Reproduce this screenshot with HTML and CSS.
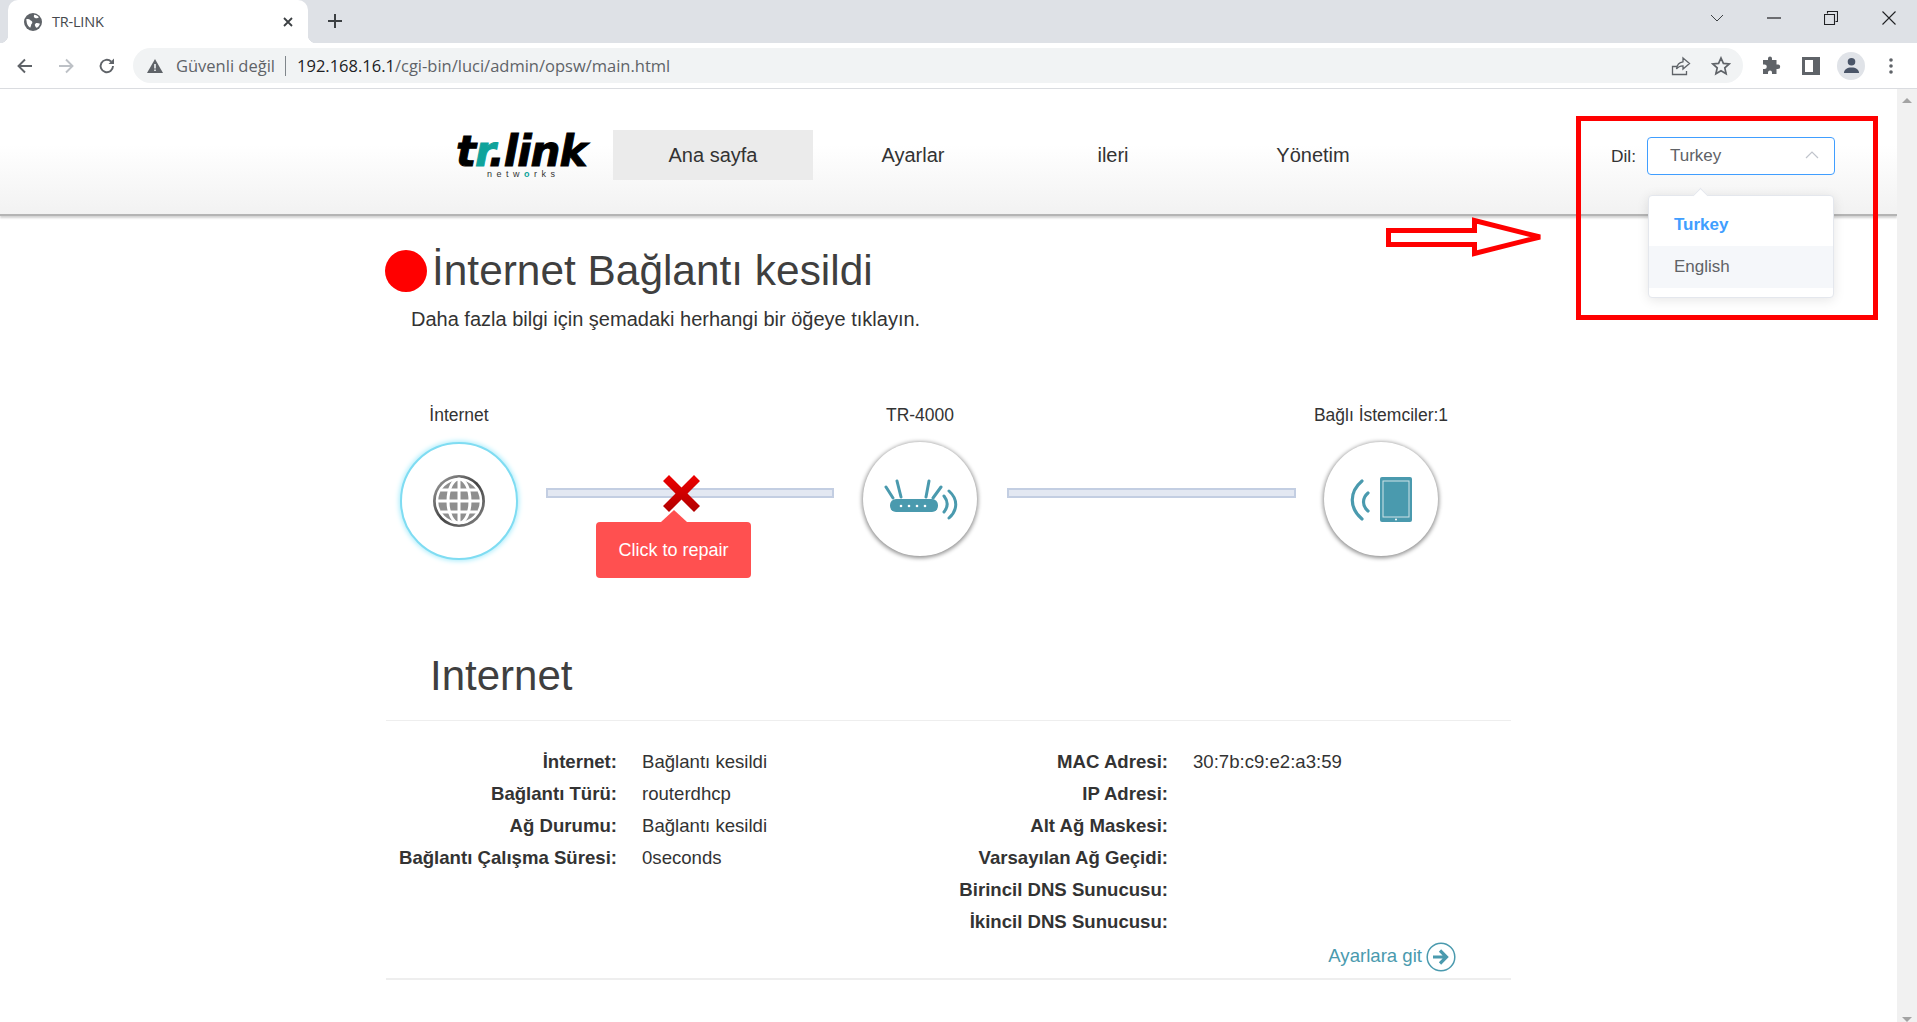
FILE: index.html

```html
<!DOCTYPE html>
<html lang="tr">
<head>
  <meta charset="utf-8">
  <title>TR-LINK</title>
  <link rel="stylesheet" href="styles.css">
</head>
<body>

<div class="tabstrip">
  <div class="tab">
    <svg class="favicon" viewBox="0 0 16 16"><circle cx="8" cy="8" r="8" fill="#5f6368"/><path d="M2 5.500c1.500-.500 2.800-.200 3.500.800.500.700 1.500.700 1.800 1.500.300.900-.200 1.700-.800 2.200-.200 1.200-.400 2-1 3-1.500-1-2.500-2.500-3-4.200zM9 1.500c1.800.200 3.200 1 4.200 2.200-.700.800-1.700 1-2.700.900-.900-.100-1.400-.700-1.800-1.500zM10.500 9c1.200-.200 2.500 0 3.700.500-.500 1.700-1.500 3-3 3.700-1-.800-1.500-2-1.600-3z" fill="#fff"/></svg>
    <span class="tab-title">TR-LINK</span>
    <svg class="tab-close" viewBox="0 0 12 12"><path d="M2 2l8 8M10 2l-8 8" stroke="#3c4043" stroke-width="1.800" fill="none"/></svg>
  </div>
  <svg class="new-tab" viewBox="0 0 16 16"><path d="M8 1v14M1 8h14" stroke="#3c4043" stroke-width="2" fill="none"/></svg>
  <div class="win-controls">
    <svg viewBox="0 0 14 8"><path d="M1 1l6 6 6-6" stroke="#3c4043" stroke-width="1" fill="none"/></svg>
    <svg viewBox="0 0 14 14"><path d="M0 7h14" stroke="#202124" stroke-width="1.200" fill="none"/></svg>
    <svg viewBox="0 0 14 14"><path d="M3.500 2.500V.500h10v10h-2M.500 3.500h10v10H.500z" stroke="#202124" stroke-width="1.100" fill="none"/></svg>
    <svg viewBox="0 0 14 14"><path d="M.500.500l13 13M13.500.500l-13 13" stroke="#202124" stroke-width="1.100" fill="none"/></svg>
  </div>
</div>

<div class="toolbar">
  <svg class="nav-btn" viewBox="0 0 18 18"><path d="M16 9H3M9 2.500L2.500 9 9 15.500" stroke="#5f6368" stroke-width="1.900" fill="none"/></svg>
  <svg class="nav-btn" viewBox="0 0 18 18"><path d="M2 9h13M9 2.500L15.500 9 9 15.500" stroke="#bdc1c6" stroke-width="1.900" fill="none"/></svg>
  <svg class="nav-btn" viewBox="0 0 18 18"><path d="M15 9a6.200 6.200 0 1 1-1.900-4.500" stroke="#5f6368" stroke-width="1.900" fill="none"/><path d="M16 1.500V7h-5.500z" fill="#5f6368"/></svg>
  <div class="omnibox">
    <svg class="warn" viewBox="0 0 16 14"><path d="M8 0l8 14H0z" fill="#5f6368"/><path d="M7.200 5h1.600v4.500H7.200zM7.200 10.500h1.600v1.600H7.200z" fill="#f1f3f4"/></svg>
    <span class="insecure">Güvenli değil</span>
    <span class="omni-sep"></span>
    <span class="url"><b>192.168.16.1</b>/cgi-bin/luci/admin/opsw/main.html</span>
    <svg class="omni-icon share" viewBox="0 0 20 20"><path d="M6 18.500H1.500v-8H6M1.500 18.500h14V15" stroke="#5f6368" stroke-width="1.300" fill="none"/><path d="M12 2l6.500 5.500L12 13v-3.200c-3 0-5 .800-6.500 3.200.400-3.800 2.700-6.700 6.500-7.200z" stroke="#5f6368" stroke-width="1.300" fill="none"/></svg>
    <svg class="omni-icon star" viewBox="0 0 20 20"><path d="M10 2l2.400 5.400 5.800.600-4.400 3.900 1.300 5.800L10 14.700l-5.100 3 1.300-5.800L1.800 8l5.800-.600z" stroke="#5f6368" stroke-width="1.700" fill="none"/></svg>
  </div>
  <svg class="tool-icon puzzle" viewBox="0 0 20 20"><path d="M7 2.500a2 2 0 0 1 4 0V4h4.500v4.500H17a2.200 2.200 0 0 1 0 4.400h-1.500V18H11v-1.500a2 2 0 0 0-4 0V18H2v-5h1.500a2.300 2.300 0 0 0 0-4.600H2V4h5z" fill="#5f6368"/></svg>
  <svg class="tool-icon panel" viewBox="0 0 18 18"><path d="M0 0h18v18H0zM3 3v12h8V3z" fill="#5f6368" fill-rule="evenodd"/></svg>
  <div class="avatar"><svg viewBox="0 0 18 18"><circle cx="9" cy="5" r="4" fill="#4a5568"/><path d="M1 17c0-4 3.500-6 8-6s8 2 8 6z" fill="#4a5568"/></svg></div>
  <svg class="tool-icon dots" viewBox="0 0 4 16"><circle cx="2" cy="2" r="1.800" fill="#5f6368"/><circle cx="2" cy="8" r="1.800" fill="#5f6368"/><circle cx="2" cy="14" r="1.800" fill="#5f6368"/></svg>
</div>

<div class="viewport">
  <div class="page">

    <div class="header">
      <div class="logo">
        <div class="logo-main">t<span class="logo-r">r</span>.link</div>
        <div class="logo-sub">netw<span class="logo-o">o</span>rks</div>
      </div>
      <ul class="menu">
        <li class="active">Ana sayfa</li>
        <li>Ayarlar</li>
        <li>ileri</li>
        <li>Yönetim</li>
      </ul>
      <div class="lang">
        <label>Dil:</label>
        <div class="select">
          <span>Turkey</span>
          <svg class="caret" viewBox="0 0 14 8"><path d="M1 7l6-6 6 6" stroke="#c0c4cc" stroke-width="1.200" fill="none"/></svg>
          <div class="dropdown">
            <div class="drop-item selected">Turkey</div>
            <div class="drop-item hover">English</div>
          </div>
        </div>
      </div>
    </div>

    <div class="content">
      <div class="status">
        <span class="dot"></span>
        <h1>İnternet Bağlantı kesildi</h1>
      </div>
      <p class="hint">Daha fazla bilgi için şemadaki herhangi bir öğeye tıklayın.</p>

      <div class="diagram">
        <div class="node node-net">
          <div class="node-label">İnternet</div>
          <div class="circle active-circle">
            <svg class="globe" viewBox="0 0 52 52">
              <defs>
                <linearGradient id="ring" x1="0" y1="0" x2="1" y2="1"><stop offset="0" stop-color="#a8a8a8"/><stop offset="0.5" stop-color="#444"/><stop offset="1" stop-color="#8a8a8a"/></linearGradient>
              </defs>
              <circle cx="26" cy="26" r="26" fill="url(#ring)"/>
              <circle cx="26" cy="26" r="22" fill="#8f8f8f" stroke="#fff" stroke-width="2.500"/>
              <ellipse cx="26" cy="26" rx="11" ry="22" fill="none" stroke="#fff" stroke-width="3"/>
              <path d="M26 4v44M4 26h44M8 15h36M8 37h36" stroke="#fff" stroke-width="3" fill="none"/>
            </svg>
          </div>
        </div>
        <div class="link link-first">
          <svg class="cross" viewBox="0 0 37 37">
            <defs><linearGradient id="crossFill" x1="0" y1="0" x2="0" y2="1"><stop offset="0" stop-color="#ee0000"/><stop offset="1" stop-color="#b00000"/></linearGradient></defs>
            <path d="M6 0l12.500 12.500L31 0l6 6-12.500 12.500L37 31l-6 6-12.500-12.500L6 37l-6-6 12.500-12.500L0 6z" fill="url(#crossFill)"/>
          </svg>
          <div class="repair">Click to repair</div>
        </div>
        <div class="node node-router">
          <div class="node-label">TR-4000</div>
          <div class="circle">
            <svg class="router" viewBox="0 0 75 41">
              <path d="M2 8l7 11M13 2l4 16M45 2l-3 16M57 8l-8 11" stroke="#4a9aae" stroke-width="3" stroke-linecap="round" fill="none"/>
              <rect x="6" y="20" width="48" height="13" rx="6" fill="#4a9aae"/>
              <g fill="#fff"><circle cx="17" cy="27" r="1.300"/><circle cx="25" cy="27" r="1.300"/><circle cx="33" cy="27" r="1.300"/><circle cx="41" cy="27" r="1.300"/></g>
              <path d="M60 17c4 5 4 11 0 16M65 12c9 8 9 19 0 27" stroke="#4a9aae" stroke-width="3" stroke-linecap="round" fill="none"/>
            </svg>
          </div>
        </div>
        <div class="link link-second"></div>
        <div class="node node-client">
          <div class="node-label">Bağlı İstemciler:1</div>
          <div class="circle">
            <svg class="tablet" viewBox="0 0 62 45">
              <path d="M12 4C-1 15-1 31 12 42M18 16c-6 5-6 13 0 18" stroke="#4a9aae" stroke-width="3.200" stroke-linecap="round" fill="none"/>
              <rect x="30" y="0" width="32" height="45" rx="2" fill="#4a9aae"/>
              <rect x="33" y="4" width="26" height="36" fill="none" stroke="#cfe3e8" stroke-width="1"/>
              <circle cx="46" cy="42.500" r="1" fill="#fff"/>
            </svg>
          </div>
        </div>
      </div>

      <h2 class="section-title">Internet</h2>
      <div class="info">
        <dl class="info-col col-left">
          <dt>İnternet:</dt><dd>Bağlantı kesildi</dd>
          <dt>Bağlantı Türü:</dt><dd>routerdhcp</dd>
          <dt>Ağ Durumu:</dt><dd>Bağlantı kesildi</dd>
          <dt>Bağlantı Çalışma Süresi:</dt><dd>0seconds</dd>
        </dl>
        <dl class="info-col">
          <dt>MAC Adresi:</dt><dd>30:7b:c9:e2:a3:59</dd>
          <dt>IP Adresi:</dt><dd></dd>
          <dt>Alt Ağ Maskesi:</dt><dd></dd>
          <dt>Varsayılan Ağ Geçidi:</dt><dd></dd>
          <dt>Birincil DNS Sunucusu:</dt><dd></dd>
          <dt>İkincil DNS Sunucusu:</dt><dd></dd>
        </dl>
      </div>
      <div class="go-row">
        <a class="go-link">Ayarlara git</a>
        <svg class="go-icon" viewBox="0 0 30 30"><circle cx="15" cy="15" r="13.800" fill="none" stroke="#4a9aae" stroke-width="1.500"/><path d="M7 15h13M14 8.500l6.500 6.500-6.500 6.500" stroke="#4a9aae" stroke-width="3.200" fill="none"/></svg>
      </div>
    </div>

    <div class="note-box"></div>
    <svg class="note-arrow" viewBox="0 0 164 40"><path d="M2.500 13.500H88.500V3.500L154 20 88.500 36.500V27.500H2.500z" fill="none" stroke="#f00" stroke-width="5"/></svg>
  </div>
  <div class="scrollbar"><span class="scroll-up"></span><span class="scroll-down"></span></div>
</div>

</body>
</html>
```

FILE: styles.css

```css
* { box-sizing: border-box; }
html, body { margin: 0; height: 100%; overflow: hidden; }
body { width: 1917px; height: 1022px; font-family: "Liberation Sans", Arial, sans-serif; color: #333; background: #fff; display: flex; flex-direction: column; }

/* browser chrome */
.tabstrip { height: 43px; background: #dee1e6; display: flex; align-items: flex-end; position: relative; flex: none; }
.tab { width: 300px; height: 43px; margin-left: 8px; padding-left: 16px; background: #fff; border-radius: 10px 10px 0 0; display: flex; align-items: center; position: relative; }
.tab::before, .tab::after { content: ""; position: absolute; bottom: 0; width: 8px; height: 8px; }
.tab::before { left: -8px; background: radial-gradient(circle at 0 0, #dee1e6 8px, #fff 8.500px); }
.tab::after { right: -8px; background: radial-gradient(circle at 100% 0, #dee1e6 8px, #fff 8.500px); }
.favicon { width: 18px; height: 18px; }
.tab-title { margin-left: 10px; font-family: "Open Sans", sans-serif; font-size: 14.500px; color: #45484d; letter-spacing: -0.200px; }
.tab-close { width: 12px; height: 12px; margin-left: auto; margin-right: 14px; }
.new-tab { width: 16px; height: 16px; margin: 0 0 14px 19px; }
.win-controls { position: absolute; top: 0; right: 0; height: 36px; }
.win-controls svg { width: 14px; height: 14px; position: absolute; top: 11px; }
.win-controls svg:nth-child(1) { right: 193px; }
.win-controls svg:nth-child(2) { right: 136px; }
.win-controls svg:nth-child(3) { right: 79px; }
.win-controls svg:nth-child(4) { right: 21px; }

.toolbar { height: 46px; background: #fff; border-bottom: 1px solid #dadce0; display: flex; align-items: center; padding-left: 16px; flex: none; }
.nav-btn { width: 18px; height: 18px; margin-right: 23px; }
.omnibox { width: 1610px; height: 35px; margin-left: -6px; padding: 0 12px 0 14px; background: #f1f3f4; border-radius: 18px; display: flex; align-items: center; font-family: "Open Sans", sans-serif; font-size: 16.500px; color: #5f6368; flex: none; }
.warn { width: 16px; height: 14px; margin-right: 13px; }
.omni-sep { width: 1px; height: 20px; background: #80868b; margin: 0 11px 0 10px; }
.url b { font-weight: 400; color: #202124; }
.omni-icon { width: 20px; height: 20px; }
.share { margin-left: auto; margin-right: 20px; }
.tool-icon { flex: none; }
.puzzle { width: 20px; height: 20px; margin-left: 18px; }
.panel { width: 18px; height: 18px; margin-left: 21px; }
.avatar { width: 28px; height: 28px; margin-left: 17px; background: #e0e3e8; border-radius: 50%; display: flex; align-items: center; justify-content: center; flex: none; }
.avatar svg { width: 17px; height: 17px; }
.dots { width: 4px; height: 16px; margin-left: 24px; }

/* page */
.viewport { flex: 1; display: flex; min-height: 0; }
.page { width: 1897px; position: relative; }
.scrollbar { width: 20px; background: #f1f1f1; position: relative; }
.scroll-up { position: absolute; left: 5px; top: 9px; border: 5px solid transparent; border-top: 0; border-bottom: 5px solid #a3a3a3; }
.scroll-down { position: absolute; left: 5px; bottom: 0; border: 5px solid transparent; border-bottom: 0; border-top: 5px solid #a3a3a3; }

.header { height: 127px; padding: 0 62px 0 456px; background: linear-gradient(to bottom, #fff 45%, #f2f2f2 100%); border-bottom: 2px solid #b4b4b4; box-shadow: 0 2px 2px rgba(0,0,0,0.18); display: flex; align-items: flex-start; }
.logo { width: 157px; padding-top: 45px; }
.logo-main { font-family: "DejaVu Sans", sans-serif; font-weight: 700; font-style: italic; font-size: 42px; line-height: 36px; height: 36px; letter-spacing: -1px; color: #000; -webkit-text-stroke: 1px #000; white-space: nowrap; }
.logo-r { color: #0fa39b; -webkit-text-stroke: 1px #0fa39b; }
.logo-sub { font-size: 9px; line-height: 8px; letter-spacing: 4.500px; padding-left: 31px; color: #333; white-space: nowrap; }
.logo-o { color: #0fa39b; font-weight: 700; }
.menu { list-style: none; margin: 41px 0 0; padding: 0; display: flex; }
.menu li { width: 200px; height: 50px; line-height: 50px; text-align: center; font-size: 20px; color: #333; }
.menu li.active { background: #ebebeb; }
.lang { margin-left: auto; padding-top: 48px; display: flex; align-items: flex-start; }
.lang label { font-size: 17.300px; line-height: 38px; margin-right: 11px; }
.select { width: 188px; height: 38px; padding-left: 22px; border: 1px solid #409eff; border-radius: 4px; background: #fff; font-size: 17px; line-height: 36px; color: #606266; position: relative; }
.caret { width: 14px; height: 8px; position: absolute; right: 15px; top: 13px; }
.dropdown { position: absolute; left: 0; top: 57px; width: 186px; height: 103px; padding-top: 8px; background: #fff; border: 1px solid #e4e7ed; border-radius: 4px; box-shadow: 0 2px 12px rgba(0,0,0,0.1); z-index: 2; }
.dropdown::before { content: ""; position: absolute; left: 46px; top: -6px; width: 10px; height: 10px; background: #fff; border-left: 1px solid #e4e7ed; border-top: 1px solid #e4e7ed; transform: rotate(45deg); }
.drop-item { height: 42px; line-height: 42px; padding-left: 25px; font-size: 17px; color: #606266; position: relative; }
.drop-item.selected { color: #409eff; font-weight: 700; }
.drop-item.hover { background: #f5f7fa; }

.content { width: 1125px; margin: 0 auto; position: relative; }
.status { display: flex; align-items: center; margin-top: 34px; height: 42px; }
.dot { width: 42px; height: 42px; background: #f00; border-radius: 50%; margin-left: -1px; margin-right: 5px; flex: none; }
h1 { margin: 0; font-size: 42.400px; font-weight: 400; color: #3f3f3f; line-height: 44px; }
.hint { margin: 15px 0 0 25px; font-size: 20px; line-height: 24px; color: #333; }

.diagram { display: flex; align-items: flex-start; margin-top: 73px; height: 248px; }
.node { display: flex; flex-direction: column; align-items: center; flex: none; }
.node-label { font-size: 17.500px; line-height: 22px; white-space: nowrap; color: #333; height: 22px; margin-bottom: 16px; }
.circle { border-radius: 50%; background: #fff; box-shadow: 0 1px 4px 1px rgba(0,0,0,0.45); display: flex; align-items: center; justify-content: center; }
.node-net { width: 118px; margin-left: 14px; }
.node-net .circle { width: 118px; height: 118px; border: 2px solid #7fdcf2; box-shadow: 0 0 5px 1px #a8ecfb; }
.node-router { width: 114px; margin-left: 29px; }
.node-router .circle, .node-client .circle { width: 114px; height: 114px; }
.node-client { width: 114px; margin-left: 28px; }
.globe { width: 52px; height: 52px; }
.router { width: 75px; height: 41px; margin-left: 2px; }
.tablet { width: 62px; height: 45px; }
.link { height: 10px; margin-top: 84px; background: #e3e8f2; border: 2px solid #c3cee2; position: relative; flex: none; }
.link-first { width: 288px; margin-left: 28px; }
.link-second { width: 289px; margin-left: 30px; }
.cross { width: 37px; height: 37px; position: absolute; left: 115px; top: -15px; }
.repair { position: absolute; left: 48px; top: 32px; width: 155px; height: 56px; line-height: 56px; text-align: center; background: #ff5050; color: #fff; font-size: 18px; border-radius: 4px; }
.repair::before { content: ""; position: absolute; left: 65px; top: -12px; width: 0; height: 0; border: 13px solid transparent; border-top: 0; border-bottom: 12px solid #ff5050; }

.section-title { margin: 0; padding-left: 44px; font-size: 42px; font-weight: 400; line-height: 48px; color: #3f3f3f; height: 69px; border-bottom: 1px solid #eee; }
.info { display: flex; padding-top: 25px; }
.info-col { margin: 0; display: grid; grid-template-columns: 231px 1fr; column-gap: 25px; grid-auto-rows: 32px; font-size: 18.600px; line-height: 32px; }
.col-left { width: 551px; align-self: flex-start; }
.info-col dt { font-weight: 700; text-align: right; white-space: nowrap; justify-self: end; }
.info-col dd { margin: 0; }
.go-row { height: 42px; padding: 0 55px 2px 0; border-bottom: 2px solid #eee; display: flex; justify-content: flex-end; align-items: center; }
.go-link { font-size: 18.600px; color: #4a9aae; margin-right: 4px; margin-top: -2px; }
.go-icon { width: 30px; height: 30px; }

/* red annotation drawn over the screenshot */
.note-box { position: absolute; left: 1576px; top: 27px; width: 302px; height: 204px; border: 5px solid #f00; z-index: 3; }
.note-arrow { position: absolute; left: 1386px; top: 128px; width: 164px; height: 40px; z-index: 3; }
```
